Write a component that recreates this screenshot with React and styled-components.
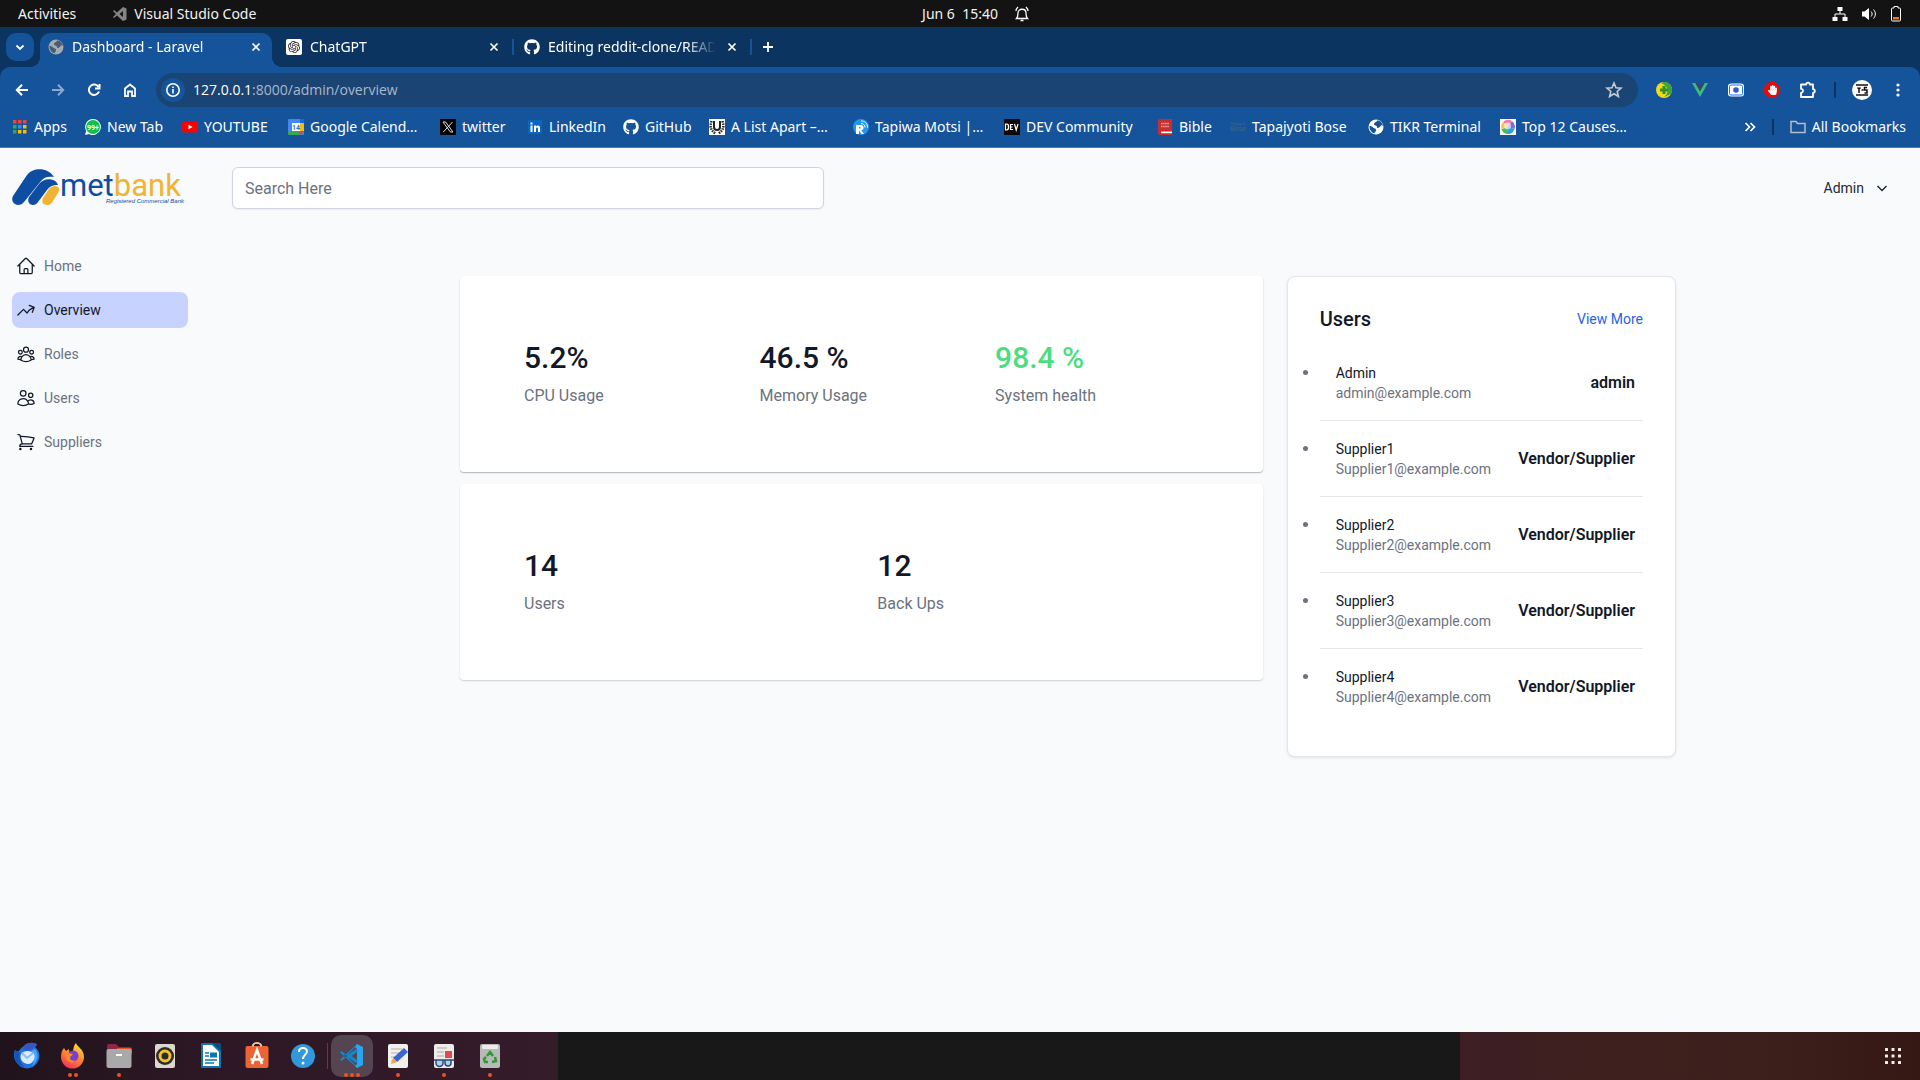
import React from "react";
import styled, { createGlobalStyle, css } from "styled-components";
import { FaGithub, FaHandPaper } from "react-icons/fa";
import { SiOpenai } from "react-icons/si";
import {
  HiOutlineHome,
  HiOutlineArrowTrendingUp,
  HiOutlineUserGroup,
  HiOutlineUsers,
  HiOutlineShoppingCart,
} from "react-icons/hi2";

const uiFont = '"Noto Sans", "Open Sans", sans-serif';
const pageFont = 'Roboto, "Liberation Sans", sans-serif';

const GlobalStyle = createGlobalStyle`
  *, *::before, *::after { box-sizing: border-box; }
  body { margin: 0; background: #f9fafc; font-family: ${pageFont}; color: #111827; }
  h1, h2, p, ul { margin: 0; padding: 0; }
  button { font: inherit; color: inherit; background: none; border: 0; padding: 0; cursor: pointer; }
  a { color: inherit; text-decoration: none; }
  svg { display: block; flex: none; }
`;

const Desktop = styled.div`
  min-height: 100vh;
  display: flex;
  flex-direction: column;
`;

/* ---------- System bar ---------- */

const SystemBar = styled.header`
  height: 27px;
  display: grid;
  grid-template-columns: 1fr auto 1fr;
  align-items: center;
  padding: 0 18px;
  background: #131313;
  color: #f2f2f2;
  font: 14px/20px ${uiFont};
`;

const SystemGroup = styled.div`
  display: flex;
  align-items: center;
  gap: ${(p) => p.$gap}px;
  justify-content: ${(p) => (p.$end ? "flex-end" : "flex-start")};
`;

const ClockGroup = styled(SystemGroup)`
  padding-left: 32px;
`;

const SystemItem = styled.button`
  display: flex;
  align-items: center;
  gap: 6px;
  white-space: pre;
`;

/* ---------- Browser ---------- */

const BrowserFrame = styled.section`
  background: #0c3460;
  color: #fff;
  font: 14px/20px ${uiFont};
`;

const TabStrip = styled.div`
  height: 40px;
  display: flex;
  align-items: flex-end;
  padding-left: 6px;
`;

const TabSearch = styled.button`
  width: 28px;
  height: 28px;
  margin: 0 6px 6px 0;
  display: grid;
  place-items: center;
  border-radius: 10px;
  background: #15539a;
`;

const Tab = styled.div`
  position: relative;
  width: 232px;
  height: 34px;
  padding: 0 8px 6px;
  display: flex;
  align-items: center;
  gap: 8px;
  ${(p) =>
    p.$active &&
    css`
      background: #15539a;
      border-radius: 10px 10px 0 0;
      &::before,
      &::after {
        content: "";
        position: absolute;
        bottom: 0;
        width: 10px;
        height: 10px;
      }
      &::before {
        right: 100%;
        background: radial-gradient(circle at 0 0, transparent 10px, #15539a 10px);
      }
      &::after {
        left: 100%;
        background: radial-gradient(circle at 100% 0, transparent 10px, #15539a 10px);
      }
    `}
`;

const TabTitle = styled.button`
  flex: 1;
  min-width: 0;
  overflow: hidden;
  white-space: nowrap;
  text-align: left;
  mask-image: linear-gradient(90deg, #000 82%, transparent);
`;

const TabDivider = styled.span`
  width: 2px;
  height: 16px;
  margin: 0 2px 12px;
  background: ${(p) => (p.$hidden ? "transparent" : "#15539a")};
`;

const CloseButton = styled.button`
  width: 16px;
  height: 20px;
  display: grid;
  place-items: center;
`;

const NewTabButton = styled.button`
  width: 28px;
  height: 28px;
  margin: 0 0 6px;
  display: grid;
  place-items: center;
`;

const Toolbar = styled.div`
  height: 46px;
  display: flex;
  align-items: center;
  padding: 0 4px;
  background: #15539a;
  border-radius: 10px 10px 0 0;
`;

const ToolButton = styled.button`
  width: 36px;
  height: 34px;
  display: grid;
  place-items: center;
  opacity: ${(p) => (p.disabled ? 0.5 : 1)};
`;

const ToolDivider = styled.span`
  width: 2px;
  height: 16px;
  margin: 0 ${(p) => p.$gap}px;
  background: #0c3460;
`;

const AddressBar = styled.label`
  flex: 1;
  height: 34px;
  margin: 0 8px;
  padding: 0 15px 0 5px;
  display: flex;
  align-items: center;
  gap: 8px;
  border-radius: 17px;
  background: #1a4474;
`;

const SiteInfo = styled.span`
  width: 24px;
  height: 24px;
  display: grid;
  place-items: center;
  border-radius: 12px;
  background: #15539a;
`;

const Address = styled.div`
  flex: 1;
  display: flex;
  color: #a9b9cd;
  font-family: "Open Sans", sans-serif;
`;

const AddressHost = styled.span`
  color: #fff;
`;

const AddressInput = styled.input`
  flex: 1;
  padding: 0;
  border: 0;
  outline: 0;
  background: none;
  color: inherit;
  font: inherit;
`;

const BookmarkBar = styled.nav`
  height: 35px;
  display: flex;
  align-items: center;
  padding: 0 14px 7px 12px;
  background: #15539a;
  border-bottom: 1px solid #4a79ae;
`;

const Bookmark = styled.a`
  width: ${(p) => (p.$width ? `${p.$width}px` : "auto")};
  flex: none;
  display: flex;
  align-items: center;
  gap: 6px;
  white-space: nowrap;
`;

const BookmarkEnd = styled.div`
  margin-left: auto;
  display: flex;
  align-items: center;
`;

/* ---------- Dashboard page ---------- */

const Page = styled.div`
  flex: 1;
  display: flex;
  flex-direction: column;
`;

const PageHeader = styled.header`
  display: flex;
  align-items: center;
  padding: 18px 32px 19px 12px;
`;

const LogoLink = styled.a`
  width: 220px;
`;

const SearchInput = styled.input`
  width: 592px;
  height: 42px;
  padding: 0 12px;
  border: 1px solid #d1d3e0;
  border-radius: 6px;
  background: #fff;
  box-shadow: 0 1px 2px rgba(0, 0, 0, 0.05);
  color: #111827;
  font: 16px/24px ${pageFont};
  &::placeholder {
    color: #6b7280;
    opacity: 1;
  }
`;

const AccountButton = styled.button`
  margin-left: auto;
  display: flex;
  align-items: center;
  gap: 12px;
  color: #1f2937;
  font: 400 14px/20px ${pageFont};
`;

const PageBody = styled.div`
  display: flex;
  align-items: flex-start;
`;

const SideNav = styled.nav`
  width: 216px;
  padding: 19px 28px 0 12px;
  display: flex;
  flex-direction: column;
  gap: 8px;
`;

const SideLink = styled.a`
  height: 36px;
  padding: 0 4px;
  display: flex;
  align-items: center;
  gap: 8px;
  border-radius: 8px;
  background: ${(p) => (p.$active ? "#c7d2fe" : "transparent")};
  color: ${(p) => (p.$active ? "#111827" : "#6b7280")};
  font: 400 14px/20px ${pageFont};
  svg {
    width: 20px;
    height: 20px;
    color: #111827;
  }
`;

const Content = styled.main`
  flex: 1;
  max-width: 1280px;
  margin: 0 auto;
  padding: 47px 32px;
  display: grid;
  grid-template-columns: repeat(3, minmax(0, 1fr));
  gap: 24px;
  align-items: start;
`;

const StatColumn = styled.div`
  grid-column: span 2;
  display: grid;
  gap: 12px;
`;

const StatCard = styled.section`
  padding: 64px;
  display: grid;
  grid-template-columns: repeat(${(p) => p.$columns}, minmax(0, 1fr));
  gap: 32px;
  border-radius: 4px;
  background: #fff;
  box-shadow: 0 1px 1px rgba(0, 0, 0, ${(p) => (p.$raised ? 0.22 : 0.1)}), 0 1px 3px rgba(0, 0, 0, 0.08);
`;

const Stat = styled.div`
  display: grid;
  gap: 8px;
`;

const StatValue = styled.p`
  font: 500 30px/36px ${pageFont};
  color: ${(p) => (p.$good ? "#4ade80" : "#111827")};
`;

const StatLabel = styled.p`
  font: 16px/24px ${pageFont};
  color: #6b7280;
`;

const UsersPanel = styled.section`
  padding: 32px;
  border: 1px solid #e5e7eb;
  border-radius: 8px;
  background: #fff;
  box-shadow: 0 1px 3px rgba(0, 0, 0, 0.1);
`;

const PanelHeader = styled.div`
  margin-bottom: 16px;
  display: flex;
  justify-content: space-between;
  align-items: flex-start;
`;

const PanelTitle = styled.h2`
  font: 500 20px/20px ${pageFont};
`;

const PanelLink = styled.a`
  font: 400 14px/20px ${pageFont};
  color: #2563eb;
`;

const UserList = styled.ul`
  list-style: disc;
  color: #6b7280;
`;

const UserItem = styled.li`
  padding: 18px 0 17px;
  & + & {
    border-top: 1px solid #e5e7eb;
  }
`;

const UserRow = styled.div`
  padding: 0 8px 0 16px;
  display: flex;
  align-items: center;
  justify-content: space-between;
`;

const UserName = styled.p`
  font: 400 14px/20px ${pageFont};
  color: #111827;
`;

const UserEmail = styled.p`
  font: 14px/20px ${pageFont};
`;

const UserRole = styled.p`
  font: 600 16px/24px ${pageFont};
  color: #111827;
`;

/* ---------- Dock ---------- */

const Dock = styled.footer`
  height: 48px;
  display: flex;
  background: #181818;
`;

const DockApps = styled.div`
  width: 558px;
  padding-left: 4px;
  display: flex;
  align-items: center;
  background: linear-gradient(90deg, #20131b, #2b1723 30%, #321a29 75%, #351c2a);
`;

const DockButton = styled.button`
  width: 42px;
  height: 42px;
  margin: 0 2px;
  display: flex;
  flex-direction: column;
  align-items: center;
  justify-content: space-between;
  padding-top: 7px;
  border-radius: 10px;
  background: ${(p) => (p.$active ? "#544550" : "transparent")};
`;

const DockDots = styled.span`
  height: 4px;
  display: flex;
  gap: 2px;
  i {
    width: 4px;
    height: 4px;
    border-radius: 2px;
    background: #e95420;
  }
`;

const DockDivider = styled.span`
  width: 1px;
  height: 26px;
  margin: 0 1px;
  background: #55404c;
`;

const DockEnd = styled.div`
  width: 460px;
  margin-left: auto;
  padding-right: 18px;
  display: flex;
  align-items: center;
  justify-content: flex-end;
  background: linear-gradient(90deg, #3c1e24, #3e201e 30%, #3c1f1b 70%, #351713);
`;

/* ---------- Icons ---------- */

const Stroke = ({ d, size = 16, box = 16, width = 2, color = "#fff", children }) => (
  <svg width={size} height={size} viewBox={`0 0 ${box} ${box}`} fill="none" stroke={color} strokeWidth={width}>
    {d && <path d={d} />}
    {children}
  </svg>
);

const CloseIcon = () => <Stroke size={10} box={10} width={1.7} d="M1.5 1.5l7 7M8.5 1.5l-7 7" />;

const GlobeIcon = ({ light = "#a5abb3", dark = "#4b5d73" }) => (
  <svg width="16" height="16" viewBox="0 0 16 16">
    <circle cx="8" cy="8" r="7.5" fill={light} />
    <path d="M9 1.5C9 3.500 6 3 6 5s3 1 3 3 3 .5 3.500-1S15 7 15 7C14.500 3.500 12 1.500 9 1.500zM1.500 7c2 0 2.500.5 3.500 1.500s3 .5 3 2.500-1.500 2-1.500 3.300C3.500 13.500 1.300 11 1.500 7z" fill={dark} />
  </svg>
);

const ChatIcon = () => (
  <svg width="16" height="16" viewBox="0 0 16 16">
    <rect width="16" height="16" rx="2" fill="#fff" />
    <SiOpenai x="2" y="2" size={12} color="#222" />
  </svg>
);

const bookmarks = [
  {
    label: "Apps",
    width: 73,
    icon: (
      <svg width="16" height="16" viewBox="0 0 16 16">
        {["#f44336", "#f44336", "#f44336", "#34a853", "#4285f4", "#fbbc05", "#34a853", "#fbbc05", "#fbbc05"].map((c, i) => (
          <rect key={i} x={1 + (i % 3) * 5} y={1 + Math.floor(i / 3) * 5} width="3.500" height="3.500" fill={c} />
        ))}
      </svg>
    ),
  },
  {
    label: "New Tab",
    width: 97,
    icon: (
      <svg width="16" height="16" viewBox="0 0 16 16">
        <path d="M8 0a8 8 0 1 1-4 15L0 16l1.200-4A8 8 0 0 1 8 0z" fill="#fff" />
        <circle cx="8" cy="8" r="7" fill="#12bf4a" />
        <text x="8" y="10.500" fontSize="7" fontWeight="700" textAnchor="middle" fill="#fff" fontFamily="Roboto">99+</text>
      </svg>
    ),
  },
  {
    label: "YOUTUBE",
    width: 106,
    icon: (
      <svg width="16" height="16" viewBox="0 0 16 16">
        <rect y="2.500" width="16" height="11" rx="3" fill="#f00" />
        <path d="M6.500 5.700v4.600l4-2.300z" fill="#fff" />
      </svg>
    ),
  },
  {
    label: "Google Calend…",
    width: 152,
    icon: (
      <svg width="16" height="16" viewBox="0 0 16 16">
        <rect width="16" height="16" rx="1" fill="#4285f4" />
        <path d="M12 4h4v8h-4z" fill="#fbbc04" />
        <path d="M12 0h3l1 1v3h-4z" fill="#1967d2" />
        <path d="M0 12h12v4H1l-1-1z" fill="#34a853" />
        <path d="M12 12h4l-4 4z" fill="#ea4335" />
        <path d="M4 4h8v8H4z" fill="#fff" />
        <text x="8" y="10.500" fontSize="7" fontWeight="700" textAnchor="middle" fill="#1a73e8" fontFamily="Roboto">14</text>
      </svg>
    ),
  },
  {
    label: "twitter",
    width: 87,
    icon: (
      <svg width="16" height="16" viewBox="0 0 16 16">
        <rect width="16" height="16" fill="#000" />
        <path d="M3 3h2.600L13 13h-2.600zM12.500 3L3.300 13" fill="none" stroke="#ddd" strokeWidth="1" />
      </svg>
    ),
  },
  {
    label: "LinkedIn",
    width: 96,
    icon: (
      <svg width="16" height="16" viewBox="0 0 16 16">
        <rect x="1" y="1" width="14" height="14" rx="1" fill="#0a66c2" />
        <path d="M3.500 6.500h2V13h-2zM3.500 3.500h2v2h-2zM7 6.500h2v1c1-1.600 4-1.500 4 1.500v4h-2V9.500c0-1.500-2-1.500-2 0V13H7z" fill="#fff" />
      </svg>
    ),
  },
  { label: "GitHub", width: 86, icon: <FaGithub size={16} /> },
  {
    label: "A List Apart –…",
    width: 144,
    icon: (
      <svg width="16" height="16" viewBox="0 0 16 16">
        <rect width="16" height="16" fill="#fff" />
        <path d="M5 2v6c0 4 6 4 6 0V2" fill="none" stroke="#222" strokeWidth="2" />
        <path d="M2.500 2C1 7 1 11 6.500 14.500M13.500 2c1.500 5 1.500 9-4 12.500" fill="none" stroke="#222" strokeWidth="2.500" strokeDasharray="1.500 1" />
      </svg>
    ),
  },
  {
    label: "Tapiwa Motsi |…",
    width: 151,
    icon: (
      <svg width="16" height="16" viewBox="0 0 16 16">
        <circle cx="8" cy="8" r="8" fill="#2196f3" />
        <path d="M3 15V6h4.500c4 0 4 5 .8 5.300L11 15H8.500L6 11.500V15z" fill="#fff" />
        <path d="M6 8h1.500v1.500H6z" fill="#2196f3" />
        <path d="M8 4.500c2.500 0 4 1.500 4 4M8 2c4 0 6.500 2.500 6.500 6.500" fill="none" stroke="#fff" />
      </svg>
    ),
  },
  {
    label: "DEV Community",
    width: 153,
    icon: (
      <svg width="16" height="16" viewBox="0 0 16 16">
        <rect width="16" height="16" fill="#0a0a0a" />
        <path d="M1.500 5v6h1c2 0 2-1 2-3s0-3-2-3zM9 5.500H6.500v5H9M6.500 8h2M10.500 5l1.700 6L14 5" fill="none" stroke="#fff" strokeWidth="1.200" />
      </svg>
    ),
  },
  {
    label: "Bible",
    width: 73,
    icon: (
      <svg width="16" height="16" viewBox="0 0 16 16">
        <path d="M3 0h12v12H4v2h11v2H3a2 2 0 0 1-2-2V2a2 2 0 0 1 2-2z" fill="#c62f2d" />
        <path d="M4 12.500h11v1.700H4z" fill="#fff" />
        <path d="M4 4.500h8M4 7.500h8" stroke="#f1a9a6" strokeWidth="1.500" strokeDasharray="1.500 .6" />
      </svg>
    ),
  },
  {
    label: "Tapajyoti Bose",
    width: 138,
    icon: (
      <svg width="16" height="16" viewBox="0 0 16 16" fill="#46658a" fontFamily="Roboto">
        <text x="0" y="6" fontSize="4">Tapajyoti</text>
        <text x="0" y="12" fontSize="7">Bose</text>
      </svg>
    ),
  },
  { label: "TIKR Terminal", width: 132, icon: <GlobeIcon light="#fff" dark="#15539a" /> },
  {
    label: "Top 12 Causes…",
    width: 140,
    icon: (
      <svg width="16" height="16" viewBox="0 0 16 16">
        <rect width="16" height="16" fill="#fff" />
        <path d="M8 8L3 3a7 7 0 0 1 9-1z" fill="#f27ba5" />
        <path d="M8 8l4-6a7 7 0 0 1 2.500 8z" fill="#7d6be0" />
        <path d="M8 8l6.500 2A7 7 0 0 1 8 15z" fill="#2a9fe0" />
        <path d="M8 8v7a7 7 0 0 1-6.500-5z" fill="#43b86a" />
        <path d="M8 8l-6.500 2A7 7 0 0 1 3 3z" fill="#f5c74a" />
        <circle cx="7.500" cy="7" r="3.500" fill="#fff" opacity=".6" />
      </svg>
    ),
  },
];

const extensions = [
  {
    name: "Download manager",
    icon: (
      <svg width="16" height="16" viewBox="0 0 16 16">
        <circle cx="8" cy="8" r="8" fill="#f4d81c" />
        <path d="M8 0a8 8 0 0 1 7 12L8 15C14 10 12 4 5 1z" fill="#3da435" />
        <path d="M6.500 4h3v2.500H12v3H9.500V12h-3V9.500H4v-3h2.500z" fill="#2f8f2c" />
      </svg>
    ),
  },
  {
    name: "Vue devtools",
    icon: (
      <svg width="16" height="16" viewBox="0 0 16 16">
        <path d="M0 1h3.500L8 9l4.500-8H16L8 15z" fill="#41b883" />
        <path d="M3.300 1H6l2 3.500L10 1h2.700L8 9.300z" fill="#35495e" />
      </svg>
    ),
  },
  {
    name: "Screen recorder",
    icon: (
      <svg width="16" height="16" viewBox="0 0 16 16">
        <rect y="1.500" width="16" height="13" rx="3" fill="#fff" />
        <rect x="1.500" y="3" width="13" height="10" rx="1.500" fill="#fff" stroke="#1976f2" />
        <circle cx="8" cy="8" r="2.800" fill="#3f51d8" />
      </svg>
    ),
  },
  {
    name: "Ad blocker",
    icon: (
      <svg width="16" height="16" viewBox="0 0 16 16">
        <path d="M5 0h6l5 5v6l-5 5H5l-5-5V5z" fill="#e30b0b" />
        <FaHandPaper x="3.500" y="3" size={10} color="#fff" />
      </svg>
    ),
  },
  {
    name: "Extensions",
    icon: (
      <Stroke size={18} box={18} width={1.8}>
        <path d="M2 3.500h5.200a1.800 1.800 0 0 1 3.600 0H14v4.700a1.800 1.800 0 0 1 0 3.600V16H2v-4.200a2 2 0 0 0 0-4z" strokeLinejoin="round" />
      </Stroke>
    ),
  },
];

const dockApps = [
  {
    name: "Thunderbird",
    dots: 0,
    icon: (
      <svg width="28" height="28" viewBox="0 0 28 28">
        <path d="M11 4c3-4 12-4 13-1l-2 2c5 4 6 11 2 16-4 7-15 7-19 1C1 19 0 12 2 8c1 1 2 2 4 1 1-2 3-4 5-5z" fill="#1f74de" />
        <path d="M11 4c3-4 12-4 13-1l-3 2c-1 3-6 4-11 3z" fill="#3556c4" />
        <path d="M22 7c4 5 3 13-3 17 3-6 3-11-1-15z" fill="#49a6f8" />
        <path d="M2 8c2 2 4 1 5 3-1 6 0 10 5 14C4 24 0 16 2 8z" fill="#1553ba" />
        <path d="M8 12c3-4 10-4 13 0 2 5-2 10-6 10s-9-4-7-10z" fill="#dcebfb" />
        <path d="M9 11l5 5 6-5" fill="none" stroke="#8fbcf0" strokeWidth="2" />
      </svg>
    ),
  },
  {
    name: "Firefox",
    dots: 2,
    icon: (
      <svg width="28" height="28" viewBox="0 0 28 28">
        <defs>
          <linearGradient id="fox" x1=".8" y1="0" x2=".3" y2="1">
            <stop offset="0" stopColor="#ffe14a" />
            <stop offset=".5" stopColor="#ff8a2a" />
            <stop offset="1" stopColor="#f0305f" />
          </linearGradient>
        </defs>
        <path d="M17 1c1 4 8 6 8 14a11.500 11.500 0 0 1-23 0c0-4 1-7 3-9l2 3 3-2c0 3 1 4 4 4 0-5 1-8 3-10z" fill="url(#fox)" />
        <circle cx="14" cy="14" r="5.500" fill="#7640d4" />
        <path d="M6 12c4-2 5 0 8 0-1 2-3 2-3 4s3 4 6 2c-3 5-11 2-11-6z" fill="#ff8a2a" />
      </svg>
    ),
  },
  {
    name: "Files",
    dots: 1,
    icon: (
      <svg width="28" height="28" viewBox="0 0 28 28">
        <path d="M2 4a2 2 0 0 1 2-2h7l3 3h11a2 2 0 0 1 2 2v6H2z" fill="#8c2745" />
        <path d="M12 6h13a2 2 0 0 1 2 2v3H10z" fill="#e0532b" />
        <rect x="1.500" y="7" width="25" height="19" rx="2" fill="#a9a9a9" />
        <path d="M11 13h6" stroke="#fff" strokeWidth="2" />
      </svg>
    ),
  },
  {
    name: "Rhythmbox",
    dots: 0,
    icon: (
      <svg width="28" height="28" viewBox="0 0 28 28">
        <rect x="4" y="2" width="20" height="24" rx="2" fill="#ded7cd" />
        <circle cx="14" cy="14" r="9" fill="#2c2c2c" />
        <circle cx="14" cy="14" r="5" fill="#2c2c2c" stroke="#f3c224" strokeWidth="3" />
      </svg>
    ),
  },
  {
    name: "LibreOffice Writer",
    dots: 0,
    icon: (
      <svg width="28" height="28" viewBox="0 0 28 28">
        <path d="M5 1h12l7 7v17a1 1 0 0 1-1 1H5a1 1 0 0 1-1-1V2a1 1 0 0 1 1-1z" fill="#0e76b4" />
        <path d="M6 3h9l7 7v14H6z" fill="#fff" />
        <path d="M15 1h9v8z" fill="#0b4d78" />
        <path d="M8 11h4M8 14h4M8 18h12M8 21h9" stroke="#0e76b4" strokeWidth="1.500" />
        <rect x="13" y="10.500" width="7" height="5" fill="#0e76b4" />
      </svg>
    ),
  },
  {
    name: "Ubuntu Software",
    dots: 0,
    icon: (
      <svg width="28" height="28" viewBox="0 0 28 28">
        <path d="M9.500 7V4a4.500 3 0 0 1 9 0v3" fill="none" stroke="#e6c8a8" strokeWidth="1.500" />
        <rect x="2.500" y="4" width="23" height="22" rx="2" fill="#ec6433" />
        <path d="M10 4.500a4 3.500 0 0 1 8 0" fill="none" stroke="#e6c8a8" strokeWidth="1.500" />
        <path d="M9 22l5-14 5 14M7.500 17.500h13" fill="none" stroke="#fff" strokeWidth="2.500" />
      </svg>
    ),
  },
  {
    name: "Help",
    dots: 0,
    icon: (
      <svg width="28" height="28" viewBox="0 0 28 28">
        <circle cx="14" cy="14" r="12" fill="#3397db" />
        <path d="M10 10c0-5.500 8-5 8-.5 0 3-4 3.500-4 7.500" fill="none" stroke="#fff" strokeWidth="2" />
        <circle cx="14" cy="21" r="1.500" fill="#fff" />
      </svg>
    ),
  },
  {
    name: "Visual Studio Code",
    dots: 3,
    active: true,
    icon: (
      <svg width="28" height="28" viewBox="0 0 28 28">
        <path d="M19 3L6 17l-2.500 2L2 17.500 17 4zM19 25L6 11 3.500 9 2 10.500 17 24z" fill="#1486cf" />
        <path d="M19 2l6 3v18l-6 3-2-2 2-2V7l-2-2z" fill="#2aa6f0" />
        <path d="M19 8l-8 6 8 6" fill="none" stroke="#1486cf" strokeWidth="3" />
      </svg>
    ),
  },
  {
    name: "Text Editor",
    dots: 1,
    icon: (
      <svg width="28" height="28" viewBox="0 0 28 28">
        <rect x="4" y="2" width="20" height="24" rx="2" fill="#f2f0ed" />
        <path d="M7 7h11M7 11h8M7 15h5M7 19h4" stroke="#c9c5bf" strokeWidth="1.500" />
        <path d="M20 6l4 4-11 10-4-4z" fill="#3565d6" />
        <path d="M9 16l4 4-6 2z" fill="#f0a541" />
      </svg>
    ),
  },
  {
    name: "Document Viewer",
    dots: 1,
    icon: (
      <svg width="28" height="28" viewBox="0 0 28 28">
        <rect x="4" y="2" width="20" height="24" rx="2" fill="#eeece8" />
        <path d="M7 6h10M7 10h7M7 14h7" stroke="#c4c0b8" strokeWidth="1.500" />
        <rect x="15" y="9" width="7" height="7" fill="#e5484d" />
        <path d="M6 18h7v3a3 3 0 0 1-7 0zM15 18h6v3a3 3 0 0 1-6 0zM4 18h20" fill="#b9cde4" stroke="#234b80" strokeWidth="1.500" />
      </svg>
    ),
  },
  {
    name: "Trash",
    dots: 1,
    icon: (
      <svg width="28" height="28" viewBox="0 0 28 28">
        <rect x="4" y="2" width="20" height="24" rx="2" fill="#b9b9b7" />
        <rect x="6" y="3" width="16" height="4" rx="1" fill="#ececea" />
        <path d="M11 14l3-4 3 4M19 15l1 4-4 1M12 20H9l-1-3 2-2" fill="none" stroke="#2f9a35" strokeWidth="2.500" />
      </svg>
    ),
  },
];

const Logo = () => (
  <svg width="180" height="44" viewBox="0 0 180 44">
    <path d="M6 39a6 6 0 0 1-5-9L15 9C21 1 36 1 42 11c-6-1-10 0-13 4L12 36c-1.500 2-3.500 3-6 3z" fill="#0d4ea2" />
    <path d="M21 39c-4 0-6-4-4-8l10-13c5-7 17-6 19 1-5 0-8 1-11 5L26 36c-1.200 2-3 3-5 3z" fill="#0d4ea2" />
    <path d="M35 39c-4 0-6-3-4-7l6-9c3-4 9-4 10-.5.500 2-.5 3.500-2 6l-5 8c-1.300 2-3 2.500-5 2.500z" fill="#f0b432" />
    <text x="48" y="30" fontFamily="Roboto" fontSize="31" fill="#0d4ea2">
      met<tspan fill="#f0b432">bank</tspan>
    </text>
    <text x="94" y="37" fontFamily="Liberation Sans" fontSize="6" fontStyle="italic" fill="#0d4ea2">
      Registered Commercial Bank
    </text>
  </svg>
);

/* ---------- Data ---------- */

const tabs = [
  { title: "Dashboard - Laravel", icon: <GlobeIcon />, active: true },
  { title: "ChatGPT", icon: <ChatIcon /> },
  { title: "Editing reddit-clone/README.md", icon: <FaGithub size={16} /> },
];

const navLinks = [
  { label: "Home", Icon: HiOutlineHome },
  { label: "Overview", Icon: HiOutlineArrowTrendingUp, active: true },
  { label: "Roles", Icon: HiOutlineUserGroup },
  { label: "Users", Icon: HiOutlineUsers },
  { label: "Suppliers", Icon: HiOutlineShoppingCart },
];

const statGroups = [
  {
    raised: true,
    stats: [
      { value: "5.2%", label: "CPU Usage" },
      { value: "46.5 %", label: "Memory Usage" },
      { value: "98.4 %", label: "System health", good: true },
    ],
  },
  {
    stats: [
      { value: "14", label: "Users" },
      { value: "12", label: "Back Ups" },
    ],
  },
];

const users = [
  { name: "Admin", email: "admin@example.com", role: "admin" },
  { name: "Supplier1", email: "Supplier1@example.com", role: "Vendor/Supplier" },
  { name: "Supplier2", email: "Supplier2@example.com", role: "Vendor/Supplier" },
  { name: "Supplier3", email: "Supplier3@example.com", role: "Vendor/Supplier" },
  { name: "Supplier4", email: "Supplier4@example.com", role: "Vendor/Supplier" },
];

export default function App() {
  return (
    <Desktop>
      <GlobalStyle />
      <SystemBar>
        <SystemGroup $gap={36}>
          <SystemItem>Activities</SystemItem>
          <SystemItem>
            <svg width="16" height="16" viewBox="0 0 16 16">
              <path d="M11 1l3.500 1.500v11L11 15 5 9.500 2 12 1 11l3-3-3-3 1-1 3 2.500zM11 5L7.500 8l3.500 3z" fill="#858585" />
            </svg>
            Visual Studio Code
          </SystemItem>
        </SystemGroup>
        <ClockGroup $gap={16}>
          <SystemItem>{"Jun 6  15:40"}</SystemItem>
          <Stroke width={1.3} d="M2.500 12.500h11c-1.500-1.500-1.500-3-1.500-5.500 0-5-8-5-8 0 0 2.500 0 4-1.500 5.500zM6.500 14.500h3M2 5c0-2 1-3 2-4M14 5c0-2-1-3-2-4" />
        </ClockGroup>
        <SystemGroup $gap={13} $end>
          <svg width="16" height="16" viewBox="0 0 16 16" fill="#fff">
            <path d="M5.500 1h5v4h-5zM.5 11h5v4h-5zM10.500 11h5v4h-5z" />
            <path d="M8 5v3M3 11V8h10v3" fill="none" stroke="#fff" />
          </svg>
          <svg width="16" height="16" viewBox="0 0 16 16">
            <path d="M1 5.500h2.500L8 2v12l-4.500-3.500H1z" fill="#fff" />
            <path d="M10 5.500c1.500 1.500 1.500 3.500 0 5M12.500 3.500c2.500 3 2.500 6 0 9" fill="none" stroke="#fff" />
          </svg>
          <svg width="12" height="16" viewBox="0 0 12 16">
            <path d="M4 .5h4v1.500h1.500a1 1 0 0 1 1 1v11a1 1 0 0 1-1 1h-7a1 1 0 0 1-1-1V3a1 1 0 0 1 1-1H4z" fill="none" stroke="#fff" />
            <path d="M3 11h6v2.500H3z" fill="#f37329" />
          </svg>
        </SystemGroup>
      </SystemBar>

      <BrowserFrame>
        <TabStrip>
          <TabSearch aria-label="Search tabs">
            <Stroke size={10} box={10} width={1.8} d="M1.500 3.500L5 7l3.500-3.500" />
          </TabSearch>
          {tabs.map((t, i) => (
            <React.Fragment key={t.title}>
              <Tab $active={t.active}>
                {t.icon}
                <TabTitle>{t.title}</TabTitle>
                <CloseButton aria-label={`Close ${t.title}`}>
                  <CloseIcon />
                </CloseButton>
              </Tab>
              <TabDivider $hidden={i === 0} />
            </React.Fragment>
          ))}
          <NewTabButton aria-label="New tab">
            <Stroke size={12} box={12} width={1.8} d="M6 1v10M1 6h10" />
          </NewTabButton>
        </TabStrip>

        <Toolbar>
          <ToolButton aria-label="Back">
            <Stroke d="M14 8H3M8 2.800L2.800 8 8 13.200" />
          </ToolButton>
          <ToolButton aria-label="Forward" disabled>
            <Stroke d="M2 8h11M8 2.800L13.200 8 8 13.200" />
          </ToolButton>
          <ToolButton aria-label="Reload">
            <Stroke d="M13 9.500A5.200 5.200 0 1 1 12.500 5M13.500 2v4.500H9" />
          </ToolButton>
          <ToolButton aria-label="Home">
            <Stroke d="M3 14V6.500L8 2.500l5 4V14h-3V9.500H6V14z" width={1.800} />
          </ToolButton>
          <AddressBar>
            <SiteInfo>
              <Stroke width={1.600}>
                <circle cx="8" cy="8" r="6.200" />
                <path d="M8 7v4.500M8 4.500v1.500" />
              </Stroke>
            </SiteInfo>
            <Address>
              <AddressHost>127.0.0.1</AddressHost>
              <AddressInput aria-label="Address" defaultValue=":8000/admin/overview" />
            </Address>
            <Stroke size={18} box={18} width={1.600} color="#c6ccd4" d="M9 2l2 4.800 5 .4-3.800 3.300 1.200 5L9 12.800l-4.400 2.700 1.200-5L2 7.200l5-.4z" />
          </AddressBar>
          {extensions.map((e) => (
            <ToolButton key={e.name} aria-label={e.name}>
              {e.icon}
            </ToolButton>
          ))}
          <ToolDivider $gap={8} />
          <ToolButton aria-label="Profile">
            <svg width="20" height="20" viewBox="0 0 20 20">
              <circle cx="10" cy="10" r="10" fill="#fff" />
              <path d="M4 5h12M4 15h12M5.500 7.500L7 9l1.500-1.500M7 9v4M9.500 10h2M15 7.500h-2.500V10H15v3h-2.500" fill="none" stroke="#111" strokeWidth="1.500" />
            </svg>
          </ToolButton>
          <ToolButton aria-label="Menu">
            <svg width="4" height="16" viewBox="0 0 4 16" fill="#fff">
              <circle cx="2" cy="3" r="1.600" />
              <circle cx="2" cy="8" r="1.600" />
              <circle cx="2" cy="13" r="1.600" />
            </svg>
          </ToolButton>
        </Toolbar>

        <BookmarkBar aria-label="Bookmarks">
          {bookmarks.map((b) => (
            <Bookmark key={b.label} href="#" $width={b.width}>
              {b.icon}
              {b.label}
            </Bookmark>
          ))}
          <BookmarkEnd>
            <button aria-label="More bookmarks">
              <Stroke size={12} box={12} width={1.700} d="M1.500 2l4 4-4 4M6.500 2l4 4-4 4" />
            </button>
            <ToolDivider $gap={16} />
          </BookmarkEnd>
          <Bookmark href="#">
            <Stroke width={1.500} color="#b9bec6" d="M1 13.500v-11h5l1.500 2H15v9z" />
            All Bookmarks
          </Bookmark>
        </BookmarkBar>
      </BrowserFrame>

      <Page>
        <PageHeader>
          <LogoLink href="#" aria-label="Metbank">
            <Logo />
          </LogoLink>
          <SearchInput type="search" aria-label="Search" placeholder="Search Here" />
          <AccountButton>
            Admin
            <Stroke size={12} box={12} width={1.500} color="#1f2937" d="M1.500 4L6 8.500 10.500 4" />
          </AccountButton>
        </PageHeader>
        <PageBody>
          <SideNav aria-label="Main">
            {navLinks.map(({ label, Icon, active }) => (
              <SideLink key={label} href="#" $active={active}>
                <Icon />
                {label}
              </SideLink>
            ))}
          </SideNav>
          <Content>
            <StatColumn>
              {statGroups.map((g, i) => (
                <StatCard key={i} $columns={g.stats.length} $raised={g.raised}>
                  {g.stats.map((s) => (
                    <Stat key={s.label}>
                      <StatValue $good={s.good}>{s.value}</StatValue>
                      <StatLabel>{s.label}</StatLabel>
                    </Stat>
                  ))}
                </StatCard>
              ))}
            </StatColumn>
            <UsersPanel>
              <PanelHeader>
                <PanelTitle>Users</PanelTitle>
                <PanelLink href="#">View More</PanelLink>
              </PanelHeader>
              <UserList>
                {users.map((u) => (
                  <UserItem key={u.name}>
                    <UserRow>
                      <div>
                        <UserName>{u.name}</UserName>
                        <UserEmail>{u.email}</UserEmail>
                      </div>
                      <UserRole>{u.role}</UserRole>
                    </UserRow>
                  </UserItem>
                ))}
              </UserList>
            </UsersPanel>
          </Content>
        </PageBody>
      </Page>

      <Dock>
        <DockApps>
          {dockApps.map((a) => (
            <React.Fragment key={a.name}>
              {a.active && <DockDivider />}
              <DockButton aria-label={a.name} $active={a.active}>
                {a.icon}
                <DockDots>
                  {Array.from({ length: a.dots }, (_, i) => (
                    <i key={i} />
                  ))}
                </DockDots>
              </DockButton>
            </React.Fragment>
          ))}
        </DockApps>
        <DockEnd>
          <button aria-label="Show applications">
            <svg width="18" height="18" viewBox="0 0 18 18" fill="#f4f0ee">
              {[0, 1, 2].map((r) => [0, 1, 2].map((c) => <rect key={`${r}${c}`} x={1 + c * 6.500} y={1 + r * 6.500} width="3" height="3" rx=".5" />))}
            </svg>
          </button>
        </DockEnd>
      </Dock>
    </Desktop>
  );
}
